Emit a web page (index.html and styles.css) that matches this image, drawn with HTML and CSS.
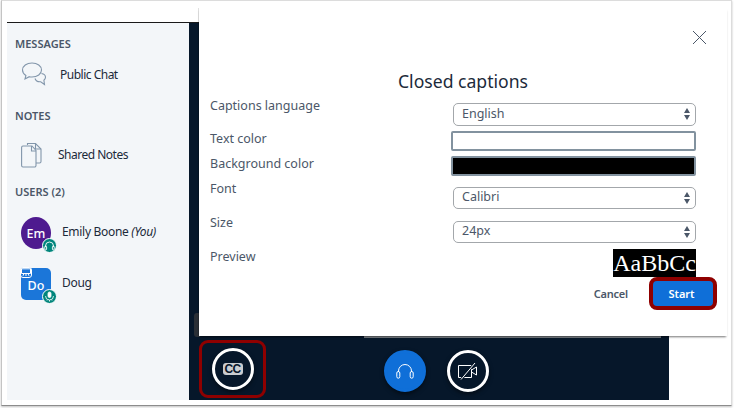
FILE: index.html
```html
<!DOCTYPE html>
<html>
<head>
  <meta charset="UTF-8">
  <title>Closed captions</title>
  <link rel="stylesheet" href="styles.css">
</head>
<body>
  <div class="frame">
    <div class="room">
      <aside class="sidebar">
        <h4 class="side-title">MESSAGES</h4>
        <div class="side-row chat-row">
          <svg class="chat-icon" width="26" height="25" viewBox="0 0 26 25" fill="none" stroke="#8296ab" stroke-width="1.1">
            <path d="M11 1C5.6 1 1.5 4 1.5 8c0 2.300 1.300 4.200 3.400 5.500L4 17l4.300-2.300c.9.200 1.800.300 2.700.300 5.400 0 9.500-3 9.500-7s-4.100-7-9.500-7z"/>
            <path d="M20.500 11.500c2.400.4 4 1.800 4 3.800 0 1.200-.6 2.200-1.600 3l.6 4.200-3.800-2.800c-2.500.2-5-1-5.700-3.200"/>
          </svg>
          <span>Public Chat</span>
        </div>
        <h4 class="side-title notes-title">NOTES</h4>
        <div class="side-row notes-row">
          <svg class="notes-icon" width="21" height="26" viewBox="0 0 21 26" fill="none" stroke="#8296ab" stroke-width="1.1">
            <path d="M6.500 3V1.500h8l5.500 5.500v12.500a1.500 1.500 0 0 1-1.500 1.500H15"/>
            <path d="M2 4h9l4 4.500V23.500a1.500 1.500 0 0 1-1.500 1.500H2A1.500 1.500 0 0 1 .6 23.500V5.500A1.500 1.500 0 0 1 2 4z"/>
            <path d="M10.500 4v5H15M14.500 1.500v5.500H20"/>
          </svg>
          <span>Shared Notes</span>
        </div>
        <h4 class="side-title users-title">USERS (2)</h4>
        <div class="user user-first">
          <div class="avatar avatar-round">
            Em
            <span class="badge">
              <svg width="11" height="10" viewBox="0 0 11 10" fill="none" stroke="#fff" stroke-width=".9">
                <path d="M1.500 6V5a4 4 0 0 1 8 0v1"/>
                <rect x=".8" y="5" width="1.800" height="4" rx=".9"/>
                <rect x="8.400" y="5" width="1.800" height="4" rx=".9"/>
              </svg>
            </span>
          </div>
          <span class="user-name">Emily Boone <em>(You)</em></span>
        </div>
        <div class="user">
          <div class="avatar avatar-square">
            Do
            <span class="presenter">
              <svg width="10" height="9" viewBox="0 0 10 9" fill="none" stroke="#fff" stroke-width="1">
                <path d="M.5 .8h9v4.700h-9zM2 7.800l1-2.300M8 7.800l-1-2.300M5 5.500v2.500"/>
              </svg>
            </span>
            <span class="badge">
              <svg width="11" height="11" viewBox="0 0 11 11" fill="#fff" stroke="#fff" stroke-width=".8">
                <rect x="4" y="1" width="3" height="5.500" rx="1.500"/>
                <path fill="none" d="M1.500 5a4 4 0 0 0 8 0M3 9.500l1-1M8 9.500l-1-1M5.500 9v1.500"/>
              </svg>
            </span>
          </div>
          <span class="user-name">Doug</span>
        </div>
      </aside>

      <main class="stage">
        <div class="cc-box">
          <button class="round-btn">
            <span class="cc-glyph">CC</span>
          </button>
        </div>
        <div class="media-btns">
          <button class="round-btn audio-btn">
            <svg width="18" height="15" viewBox="0 0 18 15" fill="none" stroke="#fff" stroke-width="1">
              <path d="M2.500 8V7a6.500 6.500 0 0 1 13 0v1"/>
              <rect x=".8" y="7.500" width="3" height="6.700" rx="1.500"/>
              <rect x="14.200" y="7.500" width="3" height="6.700" rx="1.500"/>
            </svg>
          </button>
          <button class="round-btn">
            <svg width="20" height="18" viewBox="0 0 20 18" fill="none" stroke="#fff" stroke-width="1">
              <path d="M.5 3.500h13v12H.5z"/>
              <path d="M13.500 8l5-3v8l-5-3"/>
              <path d="M3 17.500L17 1" stroke="#06172a" stroke-width="2.600"/>
              <path d="M3 17.500L17 1"/>
            </svg>
          </button>
        </div>
      </main>
    </div>

    <div class="behind-tab"></div>
    <div class="behind-bar"></div>

    <section class="modal">
      <svg class="close" width="15" height="15" viewBox="0 0 15 15" fill="none" stroke="#4b5768" stroke-width="1">
        <path d="M1 1l13 13M14 1L1 14"/>
      </svg>
      <h2 class="modal-title">Closed captions</h2>
      <div class="form">
        <label class="row row-lang">
          <span>Captions language</span>
          <div class="select-wrap">
            <select><option>English</option></select>
            <span class="arrows"></span>
          </div>
        </label>
        <div class="row row-text">
          <span>Text color</span>
          <div class="swatch"></div>
        </div>
        <div class="row row-bg">
          <span>Background color</span>
          <div class="swatch swatch-black"></div>
        </div>
        <label class="row row-font">
          <span>Font</span>
          <div class="select-wrap">
            <select><option>Calibri</option></select>
            <span class="arrows"></span>
          </div>
        </label>
        <label class="row row-size">
          <span>Size</span>
          <div class="select-wrap">
            <select><option>24px</option></select>
            <span class="arrows"></span>
          </div>
        </label>
        <div class="row row-preview">
          <span>Preview</span>
          <div class="preview">AaBbCc</div>
        </div>
      </div>
      <div class="actions">
        <button class="cancel">Cancel</button>
        <button class="start">Start</button>
      </div>
    </section>
  </div>
</body>
</html>
```

FILE: styles.css
```css
* {
  box-sizing: border-box;
}

html, body {
  margin: 0;
  height: 100%;
  background: #fff;
}

body {
  font-family: "Noto Sans", "Open Sans", sans-serif;
  font-size: 12px;
  color: #1c2a3a;
  overflow: hidden;
}

.frame {
  position: relative;
  width: 731px;
  height: 406px;
  margin-left: 1px;
  padding: 21px 0 4px 5px;
  border: 1px solid #dcdcdc;
  border-left-color: #c4c4c4;
  border-bottom-color: #8c8c8c;
  box-shadow: 0 1px 2px rgba(0, 0, 0, 0.25);
}

.room {
  display: flex;
  width: 662px;
  height: 378px;
  border-top: 1px solid #1a1a1a;
}

/* left column */
.sidebar {
  width: 182px;
  padding: 14px 0 0 8px;
  background: #f3f6f9;
}

.side-title {
  margin: 0;
  font-size: 11px;
  line-height: 14px;
  font-weight: 600;
  color: #4b5768;
}

.notes-title {
  margin-top: 22px;
}

.users-title {
  margin-top: 17px;
}

.side-row {
  display: flex;
  align-items: center;
  padding-left: 6px;
  letter-spacing: -0.5px;
}

.chat-row {
  margin-top: 10px;
  height: 26px;
  gap: 13px;
}

.notes-row {
  margin-top: 18px;
  height: 27px;
  gap: 16px;
}

.user {
  display: flex;
  align-items: flex-start;
  gap: 11px;
  margin-top: 19px;
  padding-left: 6px;
}

.user-first {
  margin-top: 18px;
}

.user-name {
  margin-top: 6px;
  letter-spacing: -0.3px;
}

.avatar {
  position: relative;
  display: flex;
  align-items: center;
  justify-content: center;
  width: 30px;
  height: 32px;
  color: #fff;
  font-size: 12.500px;
  font-weight: 500;
}

.avatar-round {
  background: #4e1a8f;
  border-radius: 50%;
}

.avatar-square {
  background: #1b76d9;
  border-radius: 5px;
  padding-top: 2px;
}

.badge {
  position: absolute;
  right: -6px;
  bottom: -4px;
  display: flex;
  align-items: center;
  justify-content: center;
  width: 15px;
  height: 15px;
  background: #00857c;
  border: 1px solid #fff;
  border-radius: 50%;
}

.presenter {
  position: absolute;
  left: -1px;
  top: -1px;
  display: flex;
  align-items: center;
  justify-content: center;
  width: 12px;
  height: 11px;
  background: #1b76d9;
  border: 1px solid #fff;
  border-radius: 3px;
}

/* dark part with the buttons */
.stage {
  flex: 1;
  display: flex;
  align-items: flex-end;
  padding: 0 0 8px 10px;
  background: #06172a;
}

.cc-box {
  display: flex;
  align-items: center;
  justify-content: center;
  width: 67px;
  height: 58px;
  margin-bottom: -6px;
  padding-bottom: 1px;
  border: 3px solid #8f0000;
  border-radius: 9px;
}

.round-btn {
  display: flex;
  align-items: center;
  justify-content: center;
  width: 42px;
  height: 42px;
  padding: 0;
  background: transparent;
  border: 3px solid #fff;
  border-radius: 50%;
  box-shadow: 0 2px 4px rgba(0, 0, 0, 0.5);
}

.audio-btn {
  background: #0f6fd8;
  border-color: #0f6fd8;
}

.cc-glyph {
  width: 20px;
  background: #c9ccd0;
  border-radius: 3px;
  color: #06172a;
  font-size: 12px;
  line-height: 12px;
  font-weight: 800;
  letter-spacing: -0.6px;
  text-align: center;
}

.media-btns {
  display: flex;
  gap: 21px;
  margin-left: 118px;
}

/* things peeking out from under the modal */
.behind-tab {
  position: absolute;
  left: 192px;
  top: 312px;
  width: 6px;
  height: 24px;
  background: #2a2f36;
  border-radius: 3px 0 0 3px;
}

.behind-bar {
  position: absolute;
  left: 362px;
  top: 334px;
  width: 297px;
  height: 3px;
  background: #7c8288;
}

/* dialog */
.modal {
  position: absolute;
  left: 197px;
  top: 7px;
  width: 528px;
  height: 328px;
  padding-top: 61px;
  background: #fff;
  box-shadow: 0 2px 2px -1px rgba(0, 0, 0, 0.55), -1px 0 0 rgba(0, 0, 0, 0.12);
}

.close {
  position: absolute;
  right: 20px;
  top: 22px;
}

.modal-title {
  margin: 0;
  font-size: 17.600px;
  line-height: 24px;
  font-weight: 400;
  text-align: center;
  color: #1c2a3a;
}

.form {
  padding: 0 31px 0 11px;
}

.row {
  display: grid;
  grid-template-columns: 1fr 243px;
  color: #4b5768;
  font-size: 12.500px;
  line-height: 18px;
}

.row-lang {
  margin-top: 4px;
  height: 33px;
}

.row-text {
  height: 25px;
}

.row-bg {
  height: 25px;
}

.row-font {
  height: 34px;
}

.row-size {
  height: 34px;
}

.row-preview {
  height: 33px;
}

.select-wrap {
  position: relative;
  height: 22px;
  margin-top: 7px;
}

.row-lang .select-wrap {
  margin-top: 6px;
  height: 23px;
}

.select-wrap select {
  width: 100%;
  height: 100%;
  padding: 0 20px 2px 8px;
  appearance: none;
  background: #fff;
  border: 1px solid #a3a7ab;
  border-radius: 5px;
  color: #4b5768;
  font: inherit;
}

.arrows {
  position: absolute;
  right: 5px;
  top: 5px;
  width: 7px;
  height: 12px;
}

.arrows::before,
.arrows::after {
  content: "";
  position: absolute;
  left: 0;
  border-left: 3.500px solid transparent;
  border-right: 3.500px solid transparent;
}

.arrows::before {
  top: 0;
  border-bottom: 5px solid #4b5768;
}

.arrows::after {
  bottom: 0;
  border-top: 5px solid #4b5768;
}

.swatch {
  width: 245px;
  height: 20px;
  margin: 1px 0 0 -2px;
  background: #fff;
  border: 2px solid #82929f;
  border-radius: 2px;
}

.swatch-black {
  background: #000;
}

.preview {
  justify-self: end;
  width: 83px;
  height: 28px;
  margin-top: 1px;
  background: #000;
  color: #fff;
  font-family: "Liberation Serif", serif;
  font-size: 24px;
  line-height: 28px;
  white-space: nowrap;
  text-align: center;
}

.actions {
  display: flex;
  justify-content: flex-end;
  align-items: center;
  gap: 21px;
  margin-top: -4px;
  padding-right: 10px;
}

.cancel {
  padding: 0 0 1px;
  background: none;
  border: 0;
  color: #4b5768;
  font: 600 11px "Noto Sans", sans-serif;
  letter-spacing: -0.2px;
}

.start {
  width: 68px;
  height: 33px;
  padding: 0 3px 1px 0;
  background: #0f6fd8;
  border: 4px solid #8f0000;
  border-radius: 8px;
  color: #fff;
  font: 600 11px "Noto Sans", sans-serif;
}
```
